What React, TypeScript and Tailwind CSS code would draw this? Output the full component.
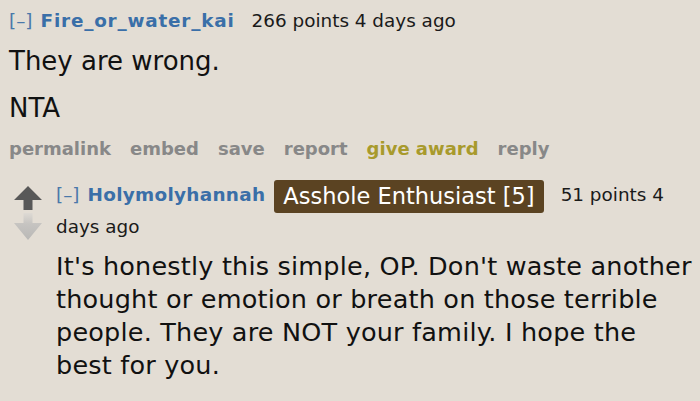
import React from 'react'

const verdana = { fontFamily: '"DejaVu Sans", Verdana, sans-serif' }

function ArrowUp() {
  return (
    <svg width="28" height="24" viewBox="0 0 28 24" className="block">
      <path d="M14 0 L28 14 L18.5 14 L18.5 24 L9.5 24 L9.5 14 L0 14 Z" fill="#585858" />
    </svg>
  )
}

function ArrowDown() {
  return (
    <svg width="28" height="27" viewBox="0 0 28 27" className="block">
      <defs>
        <linearGradient id="dg" x1="0" y1="0" x2="0" y2="1">
          <stop offset="0" stopColor="#dedad4" />
          <stop offset="0.4" stopColor="#c6c4c1" />
          <stop offset="1" stopColor="#b9b8b6" />
        </linearGradient>
      </defs>
      <path d="M9.5 0 L18.5 0 L18.5 10 L28 10 L14 27 L0 10 L9.5 10 Z" fill="url(#dg)" />
    </svg>
  )
}

export default function App() {
  const actions = ['permalink', 'embed', 'save', 'report']

  return (
    <div
      className="w-[700px] h-[401px] overflow-hidden bg-[#e3ddd4] text-[#222]"
      style={verdana}
    >
      {/* first comment */}
      <div className="pl-[9px] pt-[9px]">
        <div className="flex items-baseline text-[18.4px] leading-[24px]">
          <span className="text-[#4a78aa]">[–]</span>
          <span className="ml-[8px] font-bold tracking-[0.8px] text-[#3a6fa8]">Fire_or_water_kai</span>
          <span className="ml-[17px] text-[#1a1a1a]">266 points 4 days ago</span>
        </div>
        <p className="mt-[12px] text-[26px] leading-[32px] text-[#111]">They are wrong.</p>
        <p className="mt-[15px] text-[26px] leading-[32px] text-[#111]">NTA</p>
        <div className="mt-[13px] flex gap-[19px] text-[18px] font-bold leading-[24px] text-[#888888]">
          {actions.map((a) => (
            <span key={a}>{a}</span>
          ))}
          <span className="text-[#a89a2c]">give award</span>
          <span>reply</span>
        </div>
      </div>

      {/* reply */}
      <div className="mt-[19px] flex">
        <div className="ml-[14px] flex w-[42px] flex-col gap-[3px] pt-[6px]">
          <ArrowUp />
          <ArrowDown />
        </div>
        <div className="w-[644px]">
          <div className="flex items-start text-[18.4px] leading-[30px] text-[#1a1a1a]">
            <span className="text-[#4a78aa]">[–]</span>
            <span className="ml-[8px] font-bold tracking-[0.3px] text-[#3a6fa8]">Holymolyhannah</span>
            <span className="ml-[9px] rounded-[3px] bg-[#5b4322] px-[9px] text-[22.5px] leading-[33px] text-white">
              Asshole Enthusiast [5]
            </span>
            <span className="ml-[17px]">51 points 4</span>
          </div>
          <div className="-mt-[1px] text-[18.4px] leading-[30px] text-[#1a1a1a]">days ago</div>
          <p className="mt-[8px] text-[25.5px] tracking-[0.2px] leading-[33px] text-[#111]">
            It's honestly this simple, OP. Don't waste another
            <br />
            thought or emotion or breath on those terrible
            <br />
            people. They are NOT your family. I hope the
            <br />
            best for you.
          </p>
        </div>
      </div>
    </div>
  )
}
